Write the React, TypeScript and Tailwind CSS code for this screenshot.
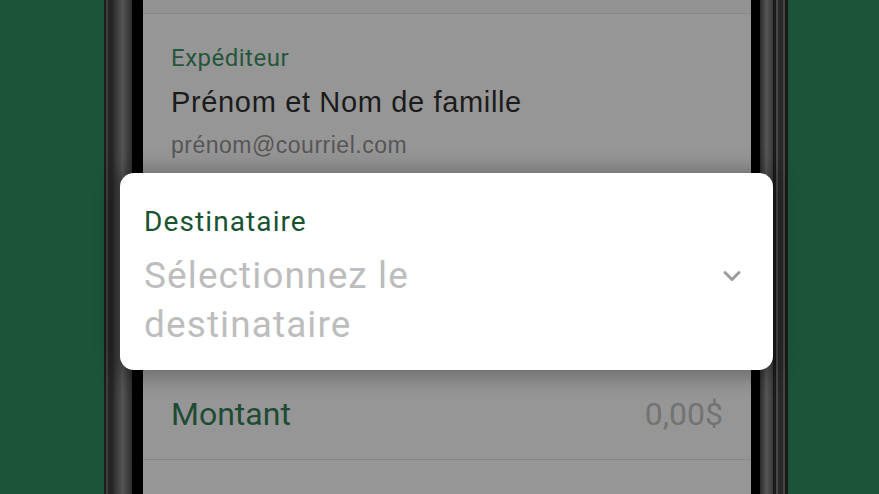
import React from "react";

const roboto = "font-['Roboto',sans-serif]";
const arial = "font-['Liberation_Sans',Arial,sans-serif]";

const FrameLeft = () => (
  <div className="flex h-full shrink-0">
    <div className="w-[2px] bg-[#1c1c1c]" />
    <div className="w-[2px] bg-[#3e3e3e]" />
    <div className="w-[5px] bg-[#252525]" />
    <div className="w-[19px] bg-gradient-to-r from-[#2b2b2b] via-[#555555] to-[#2e2e2e]" />
    <div className="w-[11px] bg-black" />
  </div>
);

const FrameRight = () => (
  <div className="flex h-full shrink-0">
    <div className="w-[9px] bg-black" />
    <div className="w-[13px] bg-gradient-to-r from-[#2b2b2b] via-[#565656] to-[#3a3a3a]" />
    <div className="w-[3px] bg-[#1a1a1a]" />
    <div className="w-[2px] bg-[#474747]" />
    <div className="w-[5px] bg-[#282828]" />
    <div className="w-[2px] bg-[#474747]" />
    <div className="w-[3px] bg-[#1a1a1a]" />
  </div>
);

const Chevron = () => (
  <svg width="20" height="14" viewBox="0 0 20 14" fill="none">
    <polyline
      points="3,3.5 10,10.5 17,3.5"
      stroke="#9c9c9c"
      strokeWidth="3"
      strokeLinecap="round"
      strokeLinejoin="round"
    />
  </svg>
);

export default function App() {
  return (
    <div className="relative flex w-[879px] h-[494px] overflow-hidden bg-[#1b5439]">
      <div className="w-[104px] shrink-0" />
      <FrameLeft />

      {/* screen, dimmed behind the picker */}
      <div className="flex flex-col w-[608px] shrink-0 bg-[#969696]">
        <div className="h-[13px] shrink-0 bg-[#939393]" />
        <div className="h-px shrink-0 bg-[#858585]" />

        {/* sender */}
        <div className="flex flex-col px-[28px] pt-[30px] pb-[22px]">
          <span className={`${roboto} text-[24px] leading-[28px] tracking-[0.5px] text-[#25563c]`}>
            Expéditeur
          </span>
          <span className={`${arial} mt-[14px] text-[29px] leading-[32px] tracking-[0.65px] text-[#1b1b1b]`}>
            Prénom et Nom de famille
          </span>
          <span className={`${arial} mt-[14px] text-[23px] leading-[26px] tracking-[0.5px] text-[#565656]`}>
            prénom@courriel.com
          </span>
        </div>
        <div className="h-px shrink-0 bg-[#858585]" />

        {/* recipient row, covered by the raised card */}
        <div className="h-[180px] shrink-0" />
        <div className="h-px shrink-0 bg-[#858585]" />

        {/* amount */}
        <div className="flex items-center justify-between px-[28px] pt-[33px] pb-[26px]">
          <span className={`${roboto} text-[32px] leading-[38px] text-[#1f4b34]`}>Montant</span>
          <span className={`${roboto} text-[32px] leading-[38px] text-[#737373]`}>0,00$</span>
        </div>
        <div className="h-px shrink-0 bg-[#858585]" />

        <div className="px-[28px] pt-[27px]">
          <span className={`${roboto} text-[32px] leading-[38px] text-[#1f4b34]`}>Message</span>
        </div>
      </div>

      <FrameRight />
      <div className="flex-1" />

      {/* raised recipient picker */}
      <div className="absolute left-[120px] top-[173px] w-[653px] h-[197px] rounded-[14px] bg-white shadow-[0_2px_20px_6px_rgba(0,0,0,0.28)] flex items-start justify-between pl-[24px] pr-[31px] pt-[33px]">
        <div className="flex flex-col">
          <span className={`${roboto} text-[28px] leading-[32px] tracking-[1.1px] text-[#18532f]`}>
            Destinataire
          </span>
          <span className={`${roboto} mt-[13px] w-[300px] text-[37px] leading-[49px] tracking-[1.1px] text-[#bdbdbd]`}>
            Sélectionnez le destinataire
          </span>
        </div>
        <div className="flex h-[49px] items-center mt-[45px]">
          <Chevron />
        </div>
      </div>
    </div>
  );
}
